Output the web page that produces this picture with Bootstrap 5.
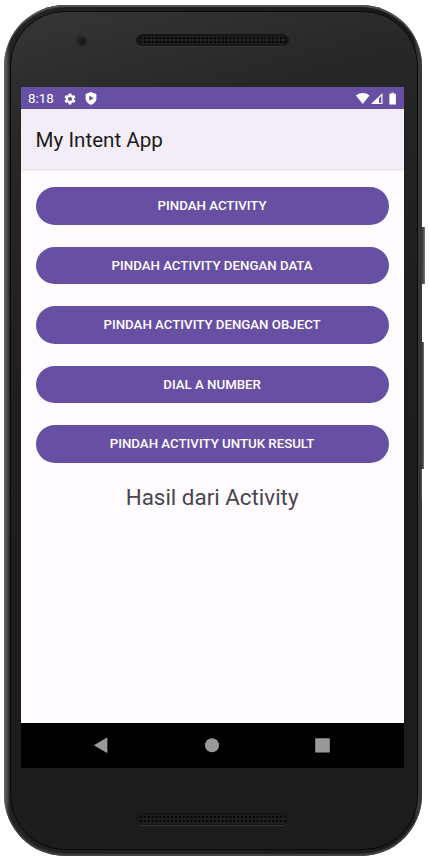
<!DOCTYPE html>
<html lang="id">
<head>
<meta charset="utf-8">
<meta name="viewport" content="width=device-width, initial-scale=1">
<title>My Intent App</title>
<link href="https://cdn.jsdelivr.net/npm/bootstrap@5.3.0/dist/css/bootstrap.min.css" rel="stylesheet">
<style>
  body { background: #fff; font-family: Roboto, "Liberation Sans", sans-serif; width: 429px; height: 857px; overflow: hidden; }
  .phone { width: 418px; height: 851px; margin: 5px 0 0 4px; padding: 6px 4px 6px 6px; border-radius: 61px; background: linear-gradient(90deg, #727272 0, #4a4a4a 3px, #222 6px, #1c1b1c 410px, #3a3638 413px, #3a3638 416px, #302d2f 418px); box-shadow: inset 0 2px 1px #555, inset 0 -2px 2px #484848; }
  .bezel { padding: 0 12px 0 10px; border-radius: 55px; border: 1px solid #090909; background: linear-gradient(165deg, #363636 0, #272727 130px, #1e1e1e 380px, #1c1c1c 100%); }
  .bezel-top { height: 75px; padding: 22px 0 0 53px; }
  .bezel-bottom { height: 81px; padding: 45px 0 0 115px; }
  .camera { width: 15px; height: 15px; border: 1px solid #303030; background: radial-gradient(circle at 55% 50%, #18161d 0, #1c1b20 3px, #292929 5px, #2e2e2e 7px); }
  .speaker { width: 153px; height: 13px; background: #161616; border-bottom: 1px solid #353535; padding: 2px 3px; }
  .speaker-holes { height: 9px; background: radial-gradient(circle, #050505 0.8px, #1e1e1e 1.5px) 0 0 / 3.9px 4px; }
  .speaker-top { margin-left: 47px; }
  .side-key { right: -3px; width: 3px; background: linear-gradient(90deg, #333, #777); }
  .key-power { top: 222px; height: 57px; }
  .key-volume { top: 337px; height: 127px; right: -2px; width: 2px; }
  .key-edge { top: 464px; height: 30px; right: 0; width: 1px; }
  .screen { width: 383px; height: 681px; background: #fffbfe; }
  .status { height: 22px; background: #6750a4; color: #fff; font-size: 13.3px; padding: 1px 7px 0; }
  .icon-settings { margin-left: 9px; }
  .icon-protect { margin-left: 8px; }
  .title-bar { height: 60px; padding: 2px 15px 0 14.6px; background: #f3edf7; color: #1d1b20; font-size: 20.6px; box-shadow: 0 1px 3px rgba(0,0,0,.16); z-index: 1; }
  .actions { padding: 18px 15.4px 0 14.6px; gap: 22.1px; }
  .btn-action { --bs-btn-color: #fff; --bs-btn-bg: #6750a4; --bs-btn-border-width: 0; --bs-btn-hover-bg: #59458f; --bs-btn-hover-color: #fff; height: 37.5px; padding: 0; font-size: 13.25px; font-weight: 500; line-height: 38px; }
  .result { color: #49454f; font-size: 22.4px; line-height: 26px; margin-top: -.6px; }
  .soft-nav { height: 45px; background: #000; }
</style>
</head>
<body>
<div class="phone position-relative">
  <div class="side-key key-power position-absolute"></div>
  <div class="side-key key-volume position-absolute"></div>
  <div class="side-key key-edge position-absolute"></div>
  <div class="bezel h-100">
    <div class="bezel-top d-flex">
      <div class="camera rounded-circle"></div>
      <div class="speaker speaker-top rounded-pill"><div class="speaker-holes rounded-pill"></div></div>
    </div>
    <main class="screen d-flex flex-column">
      <div class="status d-flex align-items-center">
        <span>8:18</span>
        <svg class="icon-settings" width="14" height="14" viewBox="0 0 24 24" fill="#fff" aria-hidden="true"><path d="M19.14 12.94c.04-.3.06-.61.06-.94s-.02-.64-.07-.94l2.03-1.58a.49.49 0 0 0 .12-.61l-1.92-3.32a.49.49 0 0 0-.59-.22l-2.39.96a7 7 0 0 0-1.62-.94l-.36-2.54a.48.48 0 0 0-.48-.41h-3.84a.47.47 0 0 0-.47.41l-.36 2.54c-.59.24-1.13.57-1.62.94l-2.39-.96a.48.48 0 0 0-.59.22L2.74 8.87a.47.47 0 0 0 .12.61l2.03 1.58a6.8 6.8 0 0 0 0 1.88l-2.03 1.58a.49.49 0 0 0-.12.61l1.92 3.32c.12.22.37.29.59.22l2.39-.96c.5.38 1.03.7 1.62.94l.36 2.54c.05.24.24.41.48.41h3.84c.24 0 .44-.17.47-.41l.36-2.54a7 7 0 0 0 1.62-.94l2.39.96c.22.08.47 0 .59-.22l1.92-3.32a.47.47 0 0 0-.12-.61zM12 15.6a3.6 3.6 0 1 1 0-7.2 3.6 3.6 0 0 1 0 7.2z"/></svg>
        <svg class="icon-protect" width="12" height="13" viewBox="0 0 12 13" aria-hidden="true"><path fill="#fff" d="M6 0l5.400 2v4.200c0 3.100-2.300 5.700-5.400 6.600C2.900 11.900.6 9.300.6 6.200V2z"/><path fill="#6750a4" d="M4.300 3.600v5.200L8.600 6.200z"/></svg>
        <svg class="ms-auto" width="42" height="14" viewBox="0 0 42 14" fill="#fff" aria-hidden="true"><path d="M.9 3.500C4.900.200 10.500.200 14.500 3.500L7.700 12z"/><path fill-rule="evenodd" d="M27.500 1V12.100H16zM26.300 3.900L24 6.200v4.700h2.300z"/><path d="M34.400 1.800h1.900V.7h2.700v1.100h1.900v10.600h-6.500z"/></svg>
      </div>
      <header class="title-bar d-flex align-items-center position-relative">My Intent App</header>
      <div class="actions d-flex flex-column flex-grow-1">
        <button class="btn btn-action rounded-pill" type="button">PINDAH ACTIVITY</button>
        <button class="btn btn-action rounded-pill" type="button">PINDAH ACTIVITY DENGAN DATA</button>
        <button class="btn btn-action rounded-pill" type="button">PINDAH ACTIVITY DENGAN OBJECT</button>
        <button class="btn btn-action rounded-pill" type="button">DIAL A NUMBER</button>
        <button class="btn btn-action rounded-pill" type="button">PINDAH ACTIVITY UNTUK RESULT</button>
        <div class="result text-center">Hasil dari Activity</div>
      </div>
      <nav class="soft-nav" aria-label="System">
        <svg class="d-block" width="383" height="45" viewBox="0 0 383 45" fill="#999"><path d="M72.800 22.200L85.500 14.700q.9-.4.900.6v14q0 1-.9.500z"/><circle cx="191" cy="22.300" r="7"/><rect x="294.200" y="15.200" width="14.600" height="14.400" rx=".7"/></svg>
      </nav>
    </main>
    <div class="bezel-bottom"><div class="speaker rounded-pill"><div class="speaker-holes rounded-pill"></div></div></div>
  </div>
</div>
<script src="https://cdn.jsdelivr.net/npm/bootstrap@5.3.0/dist/js/bootstrap.bundle.min.js"></script>
</body>
</html>
